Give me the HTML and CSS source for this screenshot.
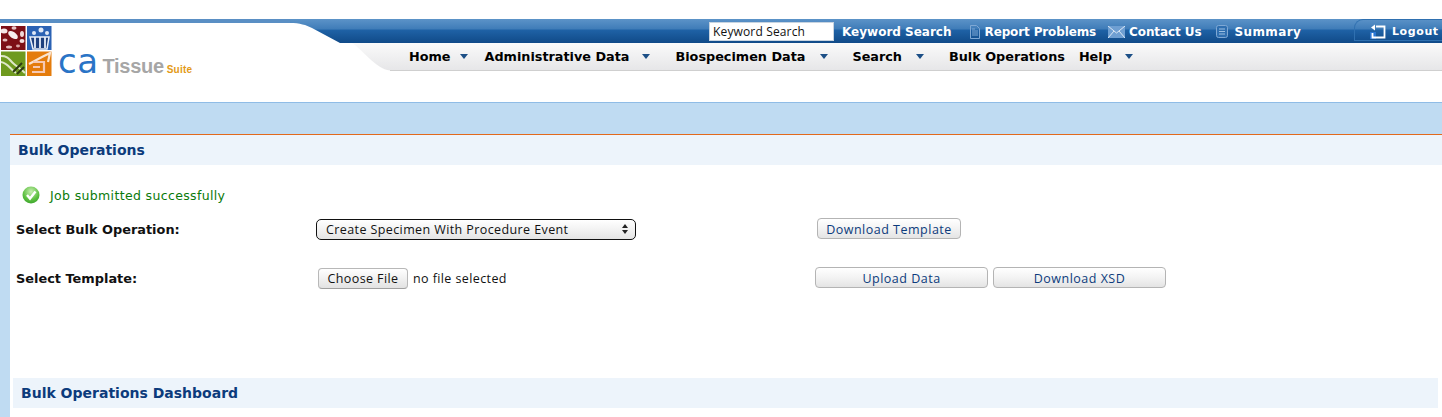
FILE: index.html
```html
<!DOCTYPE html>
<html lang="en">

<head>
  <meta charset="UTF-8">
  <title>caTissue Suite - Bulk Operations</title>
  <link rel="stylesheet" href="styles.css">
</head>

<body>
  <header class="site-header">
    <div class="logo">
      <svg class="logo-tiles" width="52" height="52" viewBox="0 0 52 52">
        <rect x="1" y="1" width="24.500" height="24" fill="#7d0f16"/>
        <ellipse cx="4" cy="6" rx="3.500" ry="2.500" fill="#f4e6e6"/>
        <ellipse cx="13" cy="10" rx="5.500" ry="3" fill="#f8eeee" transform="rotate(35 13 10)"/>
        <ellipse cx="14" cy="3" rx="2.500" ry="1.800" fill="#e8c4c4"/>
        <ellipse cx="22" cy="9" rx="2" ry="3" fill="#f0d8d8"/>
        <ellipse cx="22" cy="16" rx="2.500" ry="2" fill="#f4e0e0"/>
        <ellipse cx="5" cy="15" rx="2.500" ry="1.600" fill="#e4bcbc"/>
        <ellipse cx="9" cy="22" rx="3" ry="1.500" fill="#e4bcbc"/>
        <ellipse cx="18" cy="21" rx="2" ry="1.400" fill="#d8a4a4"/>
        <rect x="27" y="1" width="24.500" height="24" fill="#2b62b4"/>
        <path d="M30 12h19l-2 12H33z" fill="#1d3f7e" stroke="#e8eef8" stroke-width="1.500"/>
        <path d="M35 12v11M40 12v11M45 12v11" stroke="#e8eef8" stroke-width="1.800"/>
        <circle cx="34" cy="8" r="2" fill="#dfe8f6"/>
        <circle cx="41" cy="5" r="2.500" fill="#dfe8f6"/>
        <circle cx="47" cy="8" r="2" fill="#dfe8f6"/>
        <rect x="1" y="26.500" width="24.500" height="24.500" fill="#6f9a1f"/>
        <path d="M1 31c8 0 8 4 13 8s8 6 11 9M1 37c7 1 9 7 15 11" fill="none" stroke="#dfe8c8" stroke-width="2"/>
        <path d="M13 47l9-9M17 49l7-7" stroke="#2e3d12" stroke-width="2"/>
        <rect x="27" y="26.500" width="24.500" height="24.500" fill="#e47c0c"/>
        <path d="M29 39l13-7 8-4-2 9" fill="none" stroke="#f9e4d0" stroke-width="2.200"/>
        <path d="M33 37h11v10H32M33 42h7" fill="none" stroke="#f6c9b4" stroke-width="2.200"/>
      </svg>
      <span class="logo-name">
        <span class="logo-ca">ca</span>
        <span class="logo-tissue">Tissue</span>
        <span class="logo-suite">Suite</span>
      </span>
    </div>

    <div class="header-right">
      <div class="topbar">
        <svg class="bar-curve" width="50" height="24" viewBox="0 0 50 24">
          <defs>
            <linearGradient id="bandFill" x1="0" y1="0" x2="0" y2="1">
              <stop offset="0" stop-color="#5c93c8"/>
              <stop offset="0.42" stop-color="#3f7cb8"/>
              <stop offset="0.46" stop-color="#1f62a6"/>
              <stop offset="1" stop-color="#104a88"/>
            </linearGradient>
          </defs>
          <path d="M0 4C10 4 16 6 22 9L50 24V0H0z" fill="url(#bandFill)"/>
        </svg>
        <div class="topbar-fill">
          <input class="keyword-input" type="text" value="Keyword Search">
          <a class="top-link keyword-link" href="#">Keyword Search</a>
          <a class="top-link report-link" href="#">
            <svg width="12" height="14" viewBox="0 0 12 14"><path d="M1.500.500h6l3 3v10h-9zM3 6h6M3 8h6M3 10h6M3 4h3" fill="none" stroke="#7fa8d4"/></svg>
            Report Problems
          </a>
          <a class="top-link contact-link" href="#">
            <svg width="17" height="12" viewBox="0 0 17 12"><rect width="17" height="12" fill="#6f9fd2"/><path d="M0 0l8.500 7L17 0M0 12l6-7M17 12l-6-7" fill="none" stroke="#dbe7f4"/></svg>
            Contact Us
          </a>
          <a class="top-link summary-link" href="#">
            <svg width="12" height="13" viewBox="0 0 12 13"><rect x=".5" y=".5" width="11" height="12" rx="2" fill="#2f6fb0" stroke="#7fa8d4"/><path d="M3 4h6M3 6.500h6M3 9h6" stroke="#9cc0e2"/></svg>
            Summary
          </a>
          <a class="logout-tab" href="#">
            <svg width="16" height="15" viewBox="0 0 16 15"><rect y="8" width="6" height="7" fill="#2a76d2"/><path d="M6 2.500h8.500v11H2.500V9" fill="none" stroke="#fff" stroke-width="1.800"/><path d="M1 3.500L5 .5v6z" fill="#fff"/></svg>
            Logout
          </a>
        </div>
      </div>

      <nav class="navbar">
        <svg class="bar-curve" width="48" height="28" viewBox="0 0 48 28">
          <defs>
            <linearGradient id="navFill" x1="0" y1="0" x2="0" y2="1">
              <stop offset="0" stop-color="#fafafa"/>
              <stop offset="1" stop-color="#e6e6e8"/>
            </linearGradient>
          </defs>
          <path d="M0 0C10 6 24 26 38 27.500L48 27.500V0z" fill="url(#navFill)"/>
          <path d="M38 27.500H48" stroke="#cfcfcf"/>
        </svg>
        <ul class="nav-fill">
          <li class="nav-home"><a href="#">Home</a><i class="caret"></i></li>
          <li class="nav-admin"><a href="#">Administrative Data</a><i class="caret"></i></li>
          <li class="nav-bio"><a href="#">Biospecimen Data</a><i class="caret"></i></li>
          <li class="nav-search"><a href="#">Search</a><i class="caret"></i></li>
          <li class="nav-bulk"><a href="#">Bulk Operations</a></li>
          <li class="nav-help"><a href="#">Help</a><i class="caret"></i></li>
        </ul>
      </nav>
    </div>
  </header>

  <main class="content">
    <section class="panel">
      <h2 class="title-bar">Bulk Operations</h2>

      <p class="job-message">
        <svg width="18" height="18" viewBox="0 0 18 18">
          <defs>
            <radialGradient id="okFill" cx="0.5" cy="0.3" r="0.8">
              <stop offset="0" stop-color="#c6eeb0"/>
              <stop offset="0.6" stop-color="#5cbf3f"/>
              <stop offset="1" stop-color="#2f9a26"/>
            </radialGradient>
          </defs>
          <circle cx="9" cy="9" r="8.500" fill="url(#okFill)"/>
          <path d="M5 9l3 3.500L13.500 5.500" fill="none" stroke="#fff" stroke-width="2.400"/>
        </svg>
        Job submitted successfully
      </p>

      <div class="bulk-form">
        <label class="form-label">Select Bulk Operation:</label>
        <div class="select-wrap">
          <select class="op-select">
            <option>Create Specimen With Procedure Event</option>
          </select>
          <span class="select-arrows"></span>
        </div>
        <div class="form-actions first-actions">
          <button class="btn template-btn" type="button">Download Template</button>
        </div>

        <label class="form-label">Select Template:</label>
        <div class="file-field">
          <button class="file-btn" type="button">Choose File</button>
          <span class="file-name">no file selected</span>
        </div>
        <div class="form-actions">
          <button class="btn wide-btn" type="button">Upload Data</button>
          <button class="btn wide-btn" type="button">Download XSD</button>
        </div>
      </div>

      <h2 class="title-bar dashboard-bar">Bulk Operations Dashboard</h2>
    </section>
  </main>
</body>

</html>
```

FILE: styles.css
```css
html, body {
  height: 100%;
}

body {
  margin: 0;
  padding: 0;
  background-color: #fff;
  font-family: "DejaVu Sans", Verdana, sans-serif;
  overflow: hidden;
}

a {
  text-decoration: none;
}

/* header */
.site-header {
  display: flex;
  height: 83px;
  margin-top: 19px;
}

.logo {
  width: 290px;
  flex-shrink: 0;
  border-top: 4px solid #5a8fc4;
  display: flex;
  align-items: flex-start;
  box-sizing: border-box;
  padding-top: 2px;
}

.logo-tiles {
  display: block;
  flex-shrink: 0;
  filter: blur(0.4px);
}

.logo-name {
  display: flex;
  align-items: baseline;
  margin-left: 6px;
  margin-top: 18px;
  font-family: "Liberation Sans", Arial, sans-serif;
}

.logo-ca {
  font-family: "DejaVu Sans", sans-serif;
  font-size: 34px;
  line-height: 36px;
  color: #2a74c6;
  letter-spacing: 0.5px;
}

.logo-tissue {
  font-size: 20px;
  color: #a6a6a6;
  font-weight: bold;
  margin-left: 4px;
  letter-spacing: -0.3px;
}

.logo-suite {
  font-size: 10px;
  color: #e39a16;
  font-weight: bold;
  margin-left: 3px;
  letter-spacing: 0.2px;
}

.header-right {
  flex: 1;
  min-width: 0;
}

.bar-curve {
  display: block;
  flex-shrink: 0;
}

.topbar {
  display: flex;
  height: 24px;
}

.topbar-fill {
  flex: 1;
  display: flex;
  align-items: center;
  padding-left: 369px;
  background: linear-gradient(#5c93c8 0, #3f7cb8 10px, #1f62a6 11px, #104a88 100%);
}

.keyword-input {
  width: 125px;
  height: 19px;
  box-sizing: border-box;
  border: 1px solid #c8d4e0;
  padding: 0 3px;
  background-color: #fff;
  color: #111;
  font-family: "Open Sans", sans-serif;
  font-size: 12px;
  letter-spacing: 0.15px;
}

.top-link {
  display: flex;
  align-items: center;
  gap: 4px;
  padding-top: 1px;
  color: #fff;
  font-size: 12px;
  font-weight: bold;
  white-space: nowrap;
}

.keyword-link {
  margin-left: 8px;
}

.report-link {
  margin-left: 17px;
  letter-spacing: -0.13px;
}

.contact-link {
  margin-left: 12px;
  letter-spacing: -0.1px;
}

.summary-link {
  margin-left: 15px;
  gap: 6px;
  letter-spacing: 0.4px;
}

.logout-tab {
  display: flex;
  align-items: center;
  gap: 6px;
  margin-left: auto;
  width: 88px;
  height: 22px;
  box-sizing: border-box;
  padding: 2px 0 0 15px;
  align-self: flex-start;
  border: 1px solid #2f70b0;
  border-right: none;
  border-radius: 9px 0 0 0;
  color: #fff;
  font-size: 11px;
  font-weight: bold;
  letter-spacing: 0.6px;
  white-space: nowrap;
}

.navbar {
  display: flex;
  height: 28px;
  margin-left: 62px;
}

.nav-fill {
  flex: 1;
  display: flex;
  align-items: flex-start;
  list-style-type: none;
  margin: 0;
  padding: 6px 0 0 9px;
  background: linear-gradient(#fafafa, #e6e6e8);
  border-bottom: 1px solid #cfcfcf;
  box-sizing: border-box;
}

.nav-fill li {
  display: flex;
  align-items: center;
  white-space: nowrap;
}

.nav-fill a {
  color: #000;
  font-size: 12.800px;
  font-weight: bold;
}

.caret {
  width: 0;
  height: 0;
  margin-left: 9px;
  border-left: 4px solid transparent;
  border-right: 4px solid transparent;
  border-top: 5px solid #1c4f86;
}

.nav-admin { margin-left: 17px; }
.nav-admin .caret { margin-left: 13px; }
.nav-bio { margin-left: 25px; }
.nav-bio .caret { margin-left: 15px; }
.nav-search { margin-left: 24px; }
.nav-search .caret { margin-left: 14px; }
.nav-bulk { margin-left: 25px; }
.nav-help { margin-left: 14px; }
.nav-help .caret { margin-left: 13px; }

/* content */
.content {
  height: calc(100% - 102px);
  box-sizing: border-box;
  border-top: 1px solid #8fbce6;
  background-color: #bfdbf2;
  padding: 31px 0 0 10px;
}

.panel {
  height: 100%;
  box-sizing: border-box;
  background-color: #fff;
  border-top: 1px solid #e2691c;
}

.title-bar {
  margin: 0;
  height: 30px;
  line-height: 30px;
  padding-left: 8px;
  background-color: #edf4fb;
  color: #0c3b7c;
  font-size: 14px;
  font-weight: bold;
}

.job-message {
  display: flex;
  align-items: center;
  gap: 10px;
  margin: 21px 0 0 12px;
  height: 18px;
  color: #0a7a0a;
  font-size: 12.500px;
  letter-spacing: 0.35px;
}

.bulk-form {
  display: grid;
  grid-template-columns: 300px 499px auto;
  grid-template-rows: 22px 22px;
  row-gap: 27px;
  margin: 14px 0 0 6px;
  align-items: center;
}

.form-label {
  color: #111;
  font-size: 12.900px;
  font-weight: bold;
}

.select-wrap {
  position: relative;
  width: 320px;
}

.op-select {
  display: block;
  appearance: none;
  width: 100%;
  height: 21px;
  box-sizing: border-box;
  border: 1px solid #111;
  border-radius: 5px;
  padding: 0 9px;
  background: linear-gradient(#fff, #f2f2f2 50%, #e4e4e4);
  color: #111;
  font-family: "Open Sans", sans-serif;
  font-size: 12.500px;
  letter-spacing: 0.4px;
}

.select-arrows {
  position: absolute;
  top: 5px;
  right: 8px;
  width: 0;
  height: 0;
  border-left: 3px solid transparent;
  border-right: 3px solid transparent;
  border-bottom: 4px solid #222;
}

.select-arrows::after {
  content: "";
  position: absolute;
  top: 6px;
  left: -3px;
  border-left: 3px solid transparent;
  border-right: 3px solid transparent;
  border-top: 4px solid #222;
}

.file-field {
  display: flex;
  align-items: center;
  gap: 5px;
  padding-left: 2px;
}

.file-btn {
  height: 21px;
  width: 90px;
  padding: 0;
  border: 1px solid #b8b8b8;
  border-bottom-color: #a0a0a0;
  border-radius: 4px;
  background: linear-gradient(#fff, #f1f1f1 50%, #e2e2e2);
  color: #111;
  font-family: "Open Sans", sans-serif;
  font-size: 12.500px;
  letter-spacing: 0.4px;
}

.file-name {
  color: #111;
  font-family: "Open Sans", sans-serif;
  font-size: 12.500px;
  letter-spacing: 0.4px;
}

.form-actions {
  display: flex;
  gap: 5px;
  margin-top: -1px;
}

.first-actions {
  padding-left: 2px;
}

.btn {
  height: 21px;
  padding: 2px 0 0;
  border: 1px solid #b4b4b4;
  border-radius: 4px;
  background: linear-gradient(#fff, #f3f3f3 50%, #e4e4e4);
  color: #0c3b7c;
  font-family: "Open Sans", sans-serif;
  font-size: 12.500px;
  letter-spacing: 0.5px;
}

.template-btn {
  width: 144px;
}

.wide-btn {
  width: 173px;
}

.dashboard-bar {
  margin: 89px 4px 0 3px;
}
```
